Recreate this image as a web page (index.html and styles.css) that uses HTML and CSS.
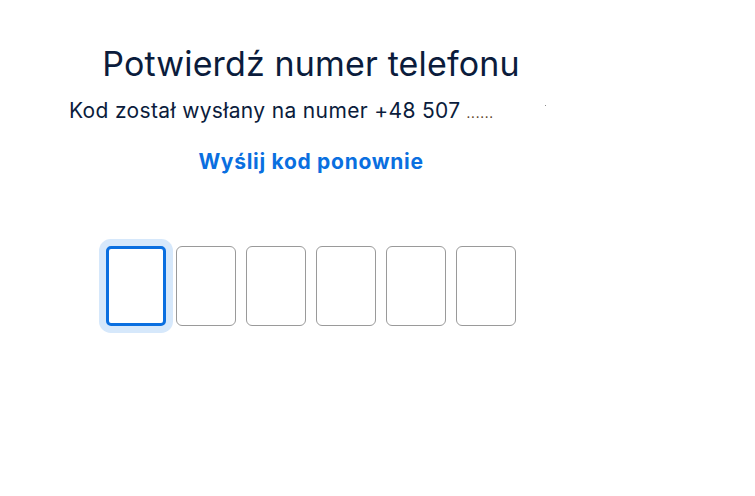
FILE: index.html
```html
<!DOCTYPE html>
<html lang="pl">
<head>
    <meta charset="UTF-8">
    <meta name="viewport" content="width=device-width, initial-scale=1.0">
    <title>Potwierdź numer telefonu</title>
    <link rel="stylesheet" href="styles.css">
</head>
<body>

<div class="verify">
    <h1 class="title">Potwierdź numer telefonu</h1>
    <p class="subtitle">Kod został wysłany na numer +48 507 <span class="masked">......</span><span class="speck"></span></p>

    <a href="#" class="resend">Wyślij kod ponownie</a>

    <form class="code-form">
        <input type="text" class="code-box focused" maxlength="1" inputmode="numeric">
        <input type="text" class="code-box" maxlength="1" inputmode="numeric">
        <input type="text" class="code-box" maxlength="1" inputmode="numeric">
        <input type="text" class="code-box" maxlength="1" inputmode="numeric">
        <input type="text" class="code-box" maxlength="1" inputmode="numeric">
        <input type="text" class="code-box" maxlength="1" inputmode="numeric">
    </form>
</div>

</body>
</html>
```

FILE: styles.css
```css
body {
    font-family: Inter, "Noto Sans", sans-serif;
    background-color: #fff;
    color: #0b1c3c;
    margin: 0;
    padding: 0;
}

.verify {
    width: 622px;
    display: flex;
    flex-direction: column;
    align-items: center;
    padding-top: 43px;
}

.title {
    font-size: 34px;
    font-weight: 400;
    letter-spacing: 0.15px;
    margin: 0;
    line-height: 42px;
}

.subtitle {
    font-size: 21px;
    letter-spacing: 0.35px;
    margin: 13px 0 0 0;
    padding-left: 4px;
    line-height: 26px;
}

.masked {
    font-size: 10px;
    font-weight: 700;
    letter-spacing: 1.2px;
    color: #5a3c22;
}

/* stray speck trailing the line */
.speck {
    display: inline-block;
    width: 63px;
    height: 0;
    position: relative;
}

.speck::after {
    content: "";
    position: absolute;
    left: 51px;
    top: -13px;
    width: 1px;
    height: 1px;
    background-color: #8c8c8c;
}

.resend {
    font-size: 21px;
    font-weight: 700;
    letter-spacing: 0.7px;
    color: #0a6fe0;
    text-decoration: none;
    margin-top: 22px;
    line-height: 26px;
}

.code-form {
    display: flex;
    gap: 10px;
    margin-top: 71px;
    padding-bottom: 10px;
}

.code-box {
    width: 60px;
    height: 80px;
    box-sizing: border-box;
    border: 1px solid #9a9a9a;
    border-radius: 6px;
    padding: 0;
    margin: 0;
    font-size: 28px;
    text-align: center;
    background: #fff;
    outline: none;
}

.code-box.focused {
    border: 3px solid #0a6fe0;
    box-shadow: 0 0 0 7px #d6e8fb;
    border-radius: 5px;
}
```
